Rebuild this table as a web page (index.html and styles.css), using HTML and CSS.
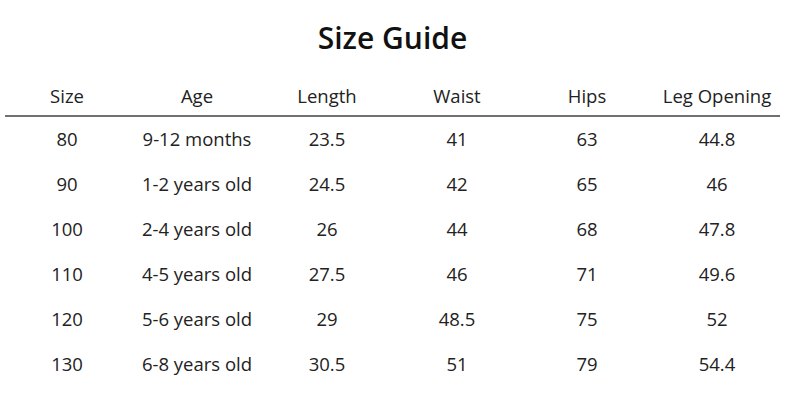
FILE: index.html
```html
<!DOCTYPE html>
<html>
<head>
<meta charset="utf-8">
<link rel="stylesheet" href="styles.css">
</head>
<body>
<div class="page">
  <h1 class="title">Size Guide</h1>
  <div class="row head">
    <div>Size</div><div>Age</div><div>Length</div><div>Waist</div><div>Hips</div><div>Leg Opening</div>
  </div>
  <div class="rule"></div>
  <div class="row"><div>80</div><div>9-12 months</div><div>23.5</div><div>41</div><div>63</div><div>44.8</div></div>
  <div class="row"><div>90</div><div>1-2 years old</div><div>24.5</div><div>42</div><div>65</div><div>46</div></div>
  <div class="row"><div>100</div><div>2-4 years old</div><div>26</div><div>44</div><div>68</div><div>47.8</div></div>
  <div class="row"><div>110</div><div>4-5 years old</div><div>27.5</div><div>46</div><div>71</div><div>49.6</div></div>
  <div class="row"><div>120</div><div>5-6 years old</div><div>29</div><div>48.5</div><div>75</div><div>52</div></div>
  <div class="row"><div>130</div><div>6-8 years old</div><div>30.5</div><div>51</div><div>79</div><div>54.4</div></div>
</div>
</body>
</html>
```
FILE: styles.css
```css
html, body {
  margin: 0;
  padding: 0;
  background: #fff;
}
.page {
  width: 785px;
  height: 400px;
  font-family: "Open Sans", "Noto Sans", sans-serif;
  color: #222;
}
.title {
  margin: 0;
  height: 75px;
  line-height: 76px;
  text-align: center;
  font-size: 30px;
  font-weight: 600;
  color: #111;
}
.row {
  display: grid;
  grid-template-columns: repeat(6, 130px);
  padding-left: 2px;
  height: 45px;
  align-items: center;
  font-size: 18.5px;
}
.row > div {
  text-align: center;
}
.head {
  height: 40px;
}
.rule {
  margin: 0 5px -1px 5px;
  height: 2px;
  background: #707070;
}
```
